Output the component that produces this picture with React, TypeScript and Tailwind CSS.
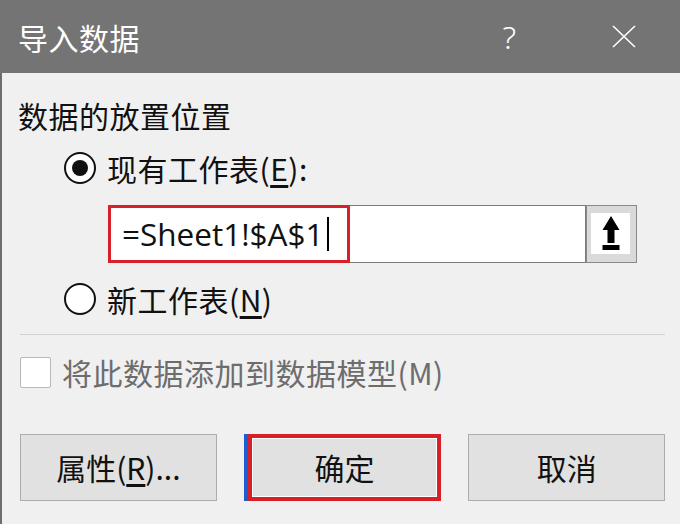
import React from "react";

const CJK = { fontFamily: '"Noto Sans CJK SC", "Noto Sans", sans-serif' };

function Radio({ checked }: { checked?: boolean }) {
  return (
    <div className="w-[32px] h-[32px] rounded-full border-[2px] border-[#111] bg-white flex items-center justify-center shrink-0">
      {checked && <div className="w-[16px] h-[16px] rounded-full bg-[#111]" />}
    </div>
  );
}

export default function App() {
  return (
    <div className="w-[680px] h-[524px] flex flex-col overflow-hidden" style={CJK}>
      <div className="h-[73px] bg-[#747474] flex items-center pl-[18px] shrink-0">
        <span className="text-white text-[30px] tracking-[0.5px] leading-none">导入数据</span>
        <span className="ml-auto mr-[96px] text-white text-[32px] font-light leading-none" style={{ fontFamily: '"Noto Sans", sans-serif' }}>?</span>
        <svg width="24" height="23" viewBox="0 0 24 23" className="mr-[44px]">
          <path d="M1 1 L23 22 M23 1 L1 22" stroke="white" strokeWidth="1.6" fill="none" />
        </svg>
      </div>
      <div className="flex-1 bg-[#f0f0f0] border-l-2 border-[#6e6e6e] flex flex-col pl-[16px] pr-[15px] text-[#111]">
        <div className="mt-[24px] h-[36px] flex items-center text-[30px] tracking-[0.5px]">数据的放置位置</div>
        <div className="mt-[17px] h-[36px] flex items-center pl-[46px] gap-[11px]">
          <Radio checked />
          <span className="text-[30px] tracking-[0.5px]">现有工作表(<span className="underline underline-offset-4">E</span>):</span>
        </div>
        <div className="mt-[19px] ml-[90px] h-[58px] flex">
          <div className="w-[242px] h-full border-[3px] border-[#d8202a] bg-white flex items-center pl-[11px]">
            <span className="text-[31.5px] leading-none" style={{ fontFamily: '"Open Sans", sans-serif' }}>=Sheet1!$A$1</span>
            <span className="ml-[3px] w-[2px] h-[34px] bg-black" />
          </div>
          <div className="w-[236px] h-full bg-white border-y border-r border-[#7a7a7a]" />
          <div className="w-[51px] h-full bg-[#dadada] border border-[#8a8a8a] pl-[4px] pt-[7px]">
            <div className="w-[39px] h-[41px] bg-white flex items-center justify-center">
              <svg width="18" height="35" viewBox="0 0 18 35">
                <path d="M9 0 L17.5 14 L12.5 14 L12.5 27 L5.5 27 L5.5 14 L0.5 14 Z" fill="#000" />
                <rect x="0.5" y="29" width="17" height="5" fill="#000" />
              </svg>
            </div>
          </div>
        </div>
        <div className="mt-[18px] h-[36px] flex items-center pl-[46px] gap-[11px]">
          <Radio />
          <span className="text-[30px] tracking-[0.5px]">新工作表(<span className="underline underline-offset-4">N</span>)</span>
        </div>
        <div className="mt-[17px] ml-[2px] h-px bg-[#d2d2d2]" />
        <div className="mt-[19px] h-[36px] flex items-center gap-[11px] pl-[2px]">
          <div className="w-[31px] h-[31px] bg-white border border-[#b8b8b8] rounded-[2px]" />
          <span className="text-[30px] tracking-[0.5px] text-[#6d6d6d]">将此数据添加到数据模型(M)</span>
        </div>
        <div className="mt-[44px] h-[67px] flex gap-[27px] pl-[2px]">
          <div className="w-[197px] h-full bg-[#e1e1e1] border border-[#adadad] flex items-center justify-center text-[30px]">
            属性(<span className="underline underline-offset-4">R</span>)...
          </div>
          <div className="w-[198px] h-full flex border-l-[4px] border-[#1f5ccf]">
            <div className="flex-1 border-[4px] border-[#d8202a] flex">
              <div className="flex-1 border border-white bg-[#e1e1e1] flex items-center justify-center text-[30px]">确定</div>
            </div>
          </div>
          <div className="w-[197px] h-full bg-[#e1e1e1] border border-[#adadad] flex items-center justify-center text-[30px]">
            取消
          </div>
        </div>
      </div>
    </div>
  );
}
